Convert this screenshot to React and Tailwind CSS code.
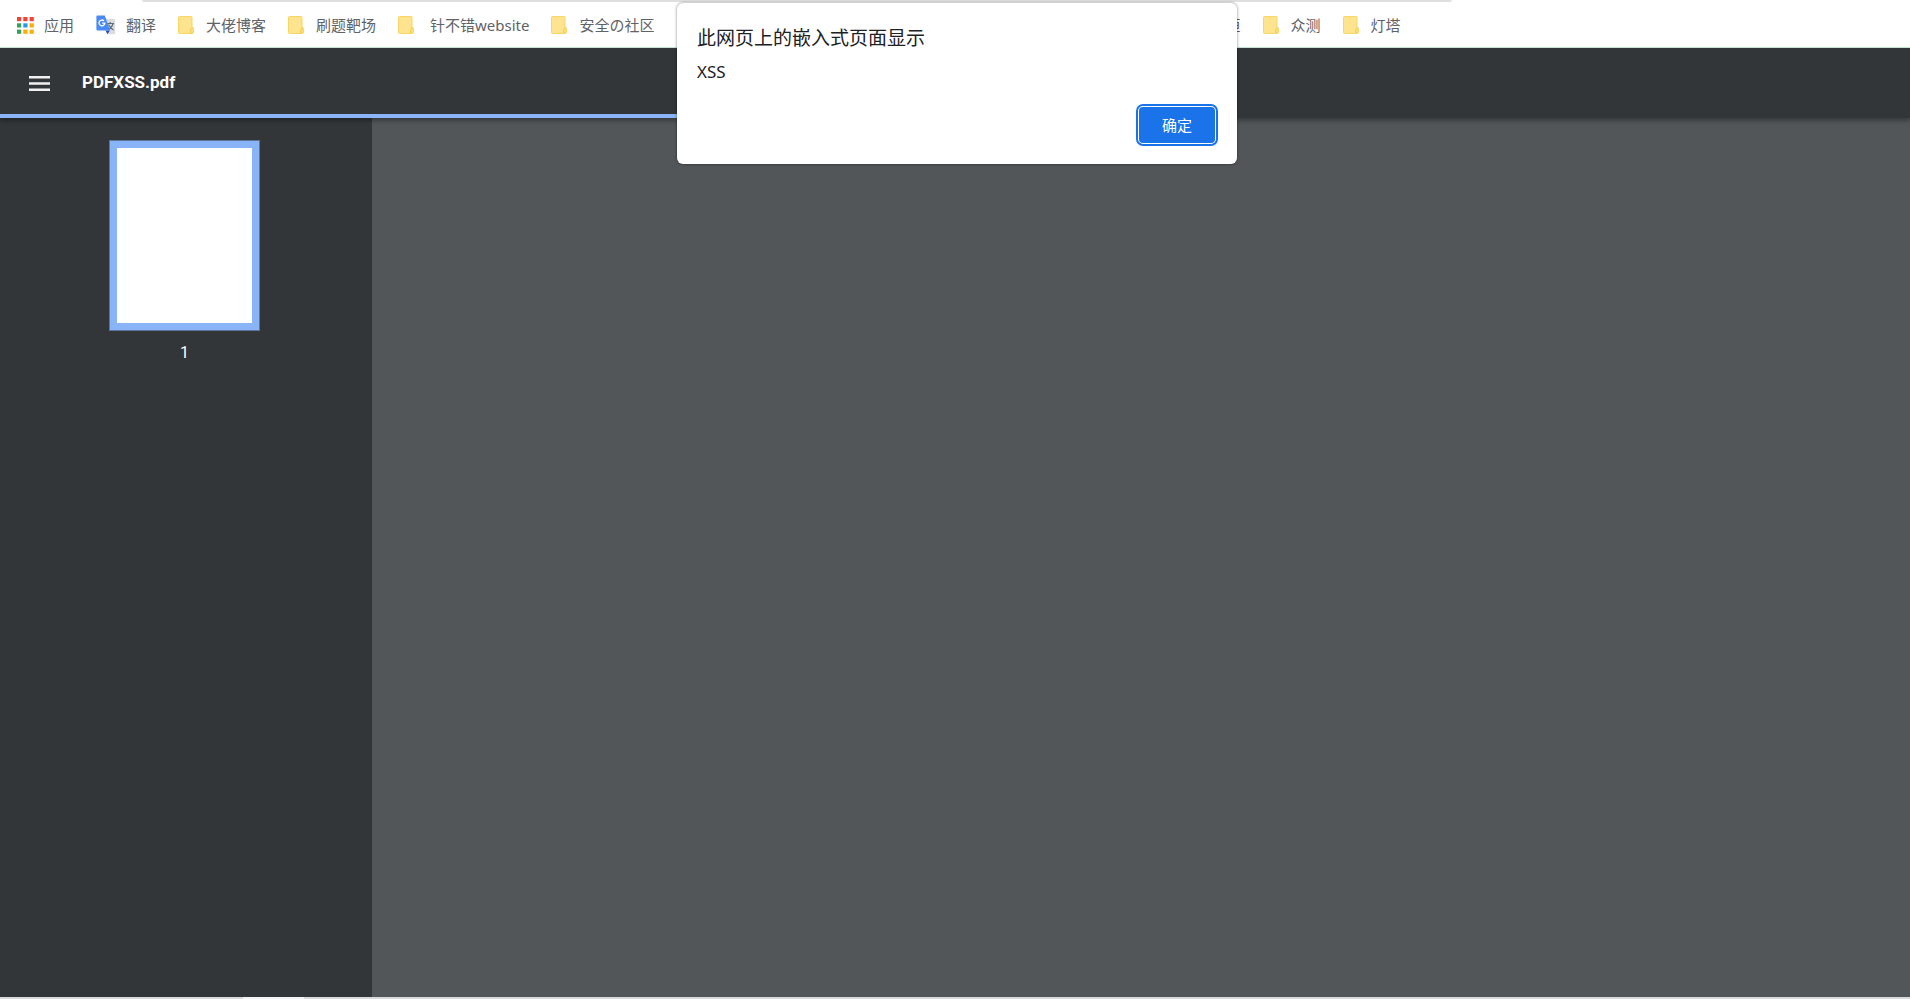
import React, { useState } from 'react';

const APP_DOTS = [
  '#f44336', '#f44336', '#f44336',
  '#34a060', '#2196f3', '#ffab00',
  '#34a060', '#ffab00', '#ffab00',
];

const BOOKMARKS = [
  { label: '大佬博客' },
  { label: '刷题靶场' },
  { label: '针不错website', className: 'gap-4' },
  { label: '安全の社区' },
  { label: '恒', className: 'gap-3 ml-[521px]' },
  { label: '众测' },
  { label: '灯塔' },
];

const AppsIcon = () => (
  <svg width="17" height="17" viewBox="0 0 17 17" aria-hidden="true">
    {APP_DOTS.map((color, i) => (
      <rect key={i} x={(i % 3) * 6.3} y={Math.floor(i / 3) * 6.3} width="4.2" height="4.2" fill={color} />
    ))}
  </svg>
);

const TranslateIcon = () => (
  <svg width="20" height="20" viewBox="0 0 20 20" aria-hidden="true">
    <path d="M8 4h10a1.200 1.200 0 0 1 1.200 1.200V18a1.200 1.200 0 0 1-1.200 1.200h-6z" fill="#dcdcdc" />
    <path d="M11 8.500h7M14.300 7v1.500M17 8.500c-.6 2.800-2.600 5-5 6.300M12.500 9.500c.9 2.200 2.700 4.200 5 5.500" fill="none" stroke="#5f6f7c" strokeWidth="1.200" />
    <path d="M9.500 15.500h4.500l-2.600 3.700z" fill="#3049b8" />
    <path d="M1.600.5h7.200l5.200 15H1.600A1.300 1.300 0 0 1 .4 14.200V1.800A1.300 1.300 0 0 1 1.600.5z" fill="#4a8af4" />
    <path d="M8 5.900A2.900 2.900 0 1 0 8.800 8.200H6.200" fill="none" stroke="#fff" strokeWidth="1.300" />
  </svg>
);

const FolderIcon = () => (
  <svg width="16" height="18" viewBox="0 0 16 18" aria-hidden="true">
    <path d="M1.500.5h11.500a1 1 0 0 1 1 1v15a1 1 0 0 1-1 1H1.500a1 1 0 0 1-1-1v-15a1 1 0 0 1 1-1z" fill="#ffe48f" stroke="#f8d565" />
    <path d="M14 11.500a1.300 1.300 0 0 1 1.400 1.300v3.200a1.400 1.400 0 0 1-1.400 1.400h-1.400v-3.400a1 1 0 0 1 1.400-1z" fill="#ffe07d" stroke="#f3cd52" strokeWidth=".9" />
  </svg>
);

const Bookmark = ({ icon, label, className = 'gap-3' }) => (
  <a href="#" className={`flex shrink-0 items-center whitespace-nowrap ${className}`}>
    {icon}
    <span>{label}</span>
  </a>
);

const BookmarksBar = () => (
  <nav className="h-12 shrink-0 overflow-hidden border-b border-[#c3e6d5] bg-white">
    {/* Lower edge of the address bar */}
    <div className="ml-[142px] mr-[458px] h-0.5 rounded-b-full bg-[#dfdfdf]" />
    <div className="flex h-[46px] items-center gap-[22px] pl-[17px] text-[15px] text-[#5f6368]">
      <Bookmark icon={<AppsIcon />} label="应用" className="gap-2.5" />
      <Bookmark icon={<TranslateIcon />} label="翻译" className="gap-2.5" />
      {BOOKMARKS.map((item) => (
        <Bookmark key={item.label} icon={<FolderIcon />} {...item} />
      ))}
    </div>
  </nav>
);

const AlertDialog = ({ onClose }) => (
  <div
    role="alertdialog"
    aria-labelledby="alert-title"
    aria-describedby="alert-message"
    className="absolute left-1/2 top-[3px] z-20 ml-0.5 flex w-[560px] -translate-x-1/2 flex-col rounded-md bg-white px-5 pb-[21px] pt-[21px] text-[#202124] shadow-[0_0_3px_rgba(0,0,0,0.5)]"
  >
    <h2 id="alert-title" className="text-[19px] leading-7">此网页上的嵌入式页面显示</h2>
    <p id="alert-message" className="mt-2 text-[17px] leading-6">XSS</p>
    <button
      type="button"
      onClick={onClose}
      className="mr-0.5 mt-[23px] h-9 w-[76px] self-end rounded-sm bg-[#1a73e8] text-[15px] text-white outline-2 outline-offset-1 outline-[#1a73e8]"
    >
      确定
    </button>
  </div>
);

export default function App() {
  const [open, setOpen] = useState(true);

  return (
    <div className="relative flex min-h-screen flex-col overflow-hidden bg-[#525659] font-['Noto_Sans','Noto_Sans_CJK_SC',sans-serif]">
      <BookmarksBar />

      {/* Viewer toolbar */}
      <header className="relative z-10 shrink-0 bg-[#323639] shadow-[0_3px_4px_rgba(0,0,0,0.3)]">
        <div className="flex h-[66px] items-center gap-8 px-[29px] pt-1">
          <button type="button" aria-label="Menu" className="text-[#f1f1f1]">
            <svg width="21" height="15" viewBox="0 0 21 15" fill="currentColor" aria-hidden="true">
              <path d="M0 0h21v2.500H0zM0 6.250h21v2.500H0zM0 12.500h21V15H0z" />
            </svg>
          </button>
          <h1 className="font-[Roboto,sans-serif] text-[17px] font-bold text-white">PDFXSS.pdf</h1>
        </div>
        <div className="h-1">
          <div className="h-full w-1/2 bg-[#8ab4f8]" />
        </div>
      </header>

      <div className="flex flex-1">
        <aside className="flex w-[372px] flex-col items-center bg-[#323639] pr-[3px] pt-[22px]">
          <button type="button" aria-label="Page 1" className="h-[191px] w-[151px] border border-[#5e7499] bg-[#8ab4f8] p-[7px]">
            <span className="block h-full bg-white" />
          </button>
          <span className="mt-3 font-[Roboto,sans-serif] text-base leading-5 text-white">1</span>
        </aside>
        <main className="flex-1" />
      </div>

      <footer className="h-0.5 shrink-0 bg-[#dadada] pl-[243px]">
        <div className="h-full w-[61px] bg-[#f3f3f3]" />
      </footer>

      {open && <AlertDialog onClose={() => setOpen(false)} />}
    </div>
  );
}
